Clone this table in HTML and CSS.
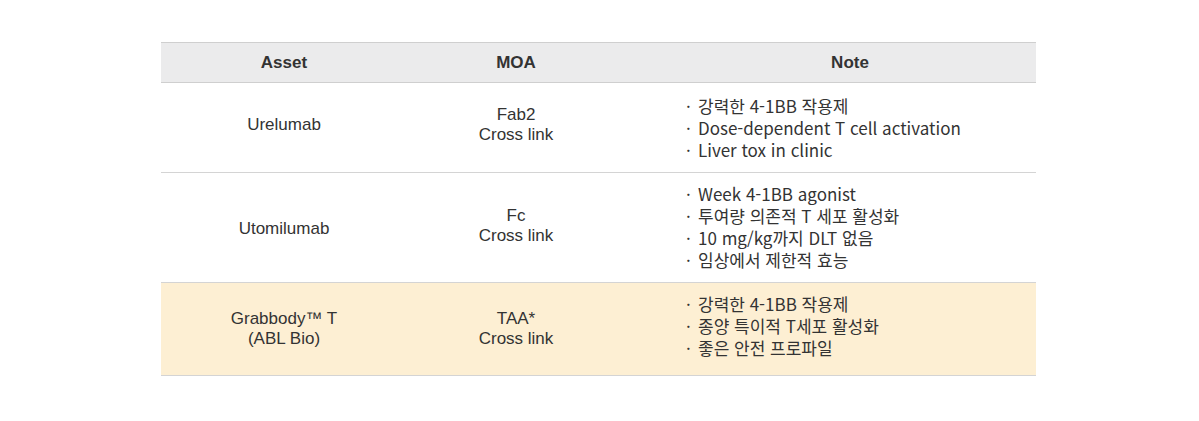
FILE: index.html
```html
<!DOCTYPE html>
<html lang="ko">
<head>
<meta charset="utf-8">
<title>4-1BB Assets</title>
<link rel="stylesheet" href="styles.css">
</head>
<body>
<div class="page">
  <table class="assets">
    <thead>
      <tr>
        <th class="c-asset">Asset</th>
        <th class="c-moa">MOA</th>
        <th class="c-note note-head">Note</th>
      </tr>
    </thead>
    <tbody>
      <tr class="r1">
        <td class="c-asset">Urelumab</td>
        <td class="c-moa">Fab2<br>Cross link</td>
        <td class="c-note">
          <ul class="notes">
            <li>강력한 4-1BB 작용제</li>
            <li>Dose-dependent T cell activation</li>
            <li>Liver tox in clinic</li>
          </ul>
        </td>
      </tr>
      <tr class="r2">
        <td class="c-asset">Utomilumab</td>
        <td class="c-moa">Fc<br>Cross link</td>
        <td class="c-note">
          <ul class="notes">
            <li>Week 4-1BB agonist</li>
            <li>투여량 의존적 T 세포 활성화</li>
            <li>10 mg/kg까지 DLT 없음</li>
            <li>임상에서 제한적 효능</li>
          </ul>
        </td>
      </tr>
      <tr class="r3 hl">
        <td class="c-asset">Grabbody™ T<br>(ABL Bio)</td>
        <td class="c-moa">TAA*<br>Cross link</td>
        <td class="c-note">
          <ul class="notes">
            <li>강력한 4-1BB 작용제</li>
            <li>종양 특이적 T세포 활성화</li>
            <li>좋은 안전 프로파일</li>
          </ul>
        </td>
      </tr>
    </tbody>
  </table>
</div>
</body>
</html>
```

FILE: styles.css
```css
html, body {
  margin: 0;
  padding: 0;
  background: #ffffff;
}

.page {
  padding: 42px 0 0 161px;
}

.assets {
  width: 875px;
  border-collapse: collapse;
  table-layout: fixed;
  font-family: "Liberation Sans", Arial, sans-serif;
  color: #333333;
  border-top: 1px solid #cfcfcf;
}

.c-asset { width: 246px; }
.c-moa { width: 218px; }

.assets th {
  background: #ebebec;
  font-size: 17px;
  font-weight: bold;
  height: 39px;
  padding: 0;
  text-align: center;
  vertical-align: middle;
  border-bottom: 1px solid #cfcfcf;
}

.assets th.note-head {
  padding-left: 39px;
}

.assets td {
  font-size: 17px;
  line-height: 20px;
  text-align: center;
  vertical-align: middle;
  padding-top: 12px;
  padding-bottom: 11px;
  padding-left: 0;
  padding-right: 0;
  border-bottom: 1px solid #d4d4d4;
}

/* row 1 */
.assets tr.r1 td.c-asset,
.assets tr.r1 td.c-moa {
  padding-bottom: 17px;
}

/* row 2 */
.assets tr.r2 td {
  padding-top: 10px;
  padding-bottom: 11px;
}
.assets tr.r2 td.c-asset {
  padding-top: 13px;
}
.assets tr.r2 td.c-moa {
  padding-bottom: 13px;
}

/* row 3 */
.assets tr.r3 td {
  padding-top: 10px;
  padding-bottom: 16px;
}
.assets tr.r3 td.c-asset,
.assets tr.r3 td.c-moa {
  padding-top: 16px;
}

.hl td {
  background: #fdefd3;
}

.assets td.c-note {
  text-align: left;
  padding-left: 61px;
}

.notes {
  list-style: none;
  margin: 0;
  padding: 0;
  font-family: "Noto Sans CJK KR", "Noto Sans", sans-serif;
  font-size: 17px;
  line-height: 22px;
  color: #333333;
}

.notes li::before {
  content: "·";
  display: inline-block;
  width: 12px;
}
```
